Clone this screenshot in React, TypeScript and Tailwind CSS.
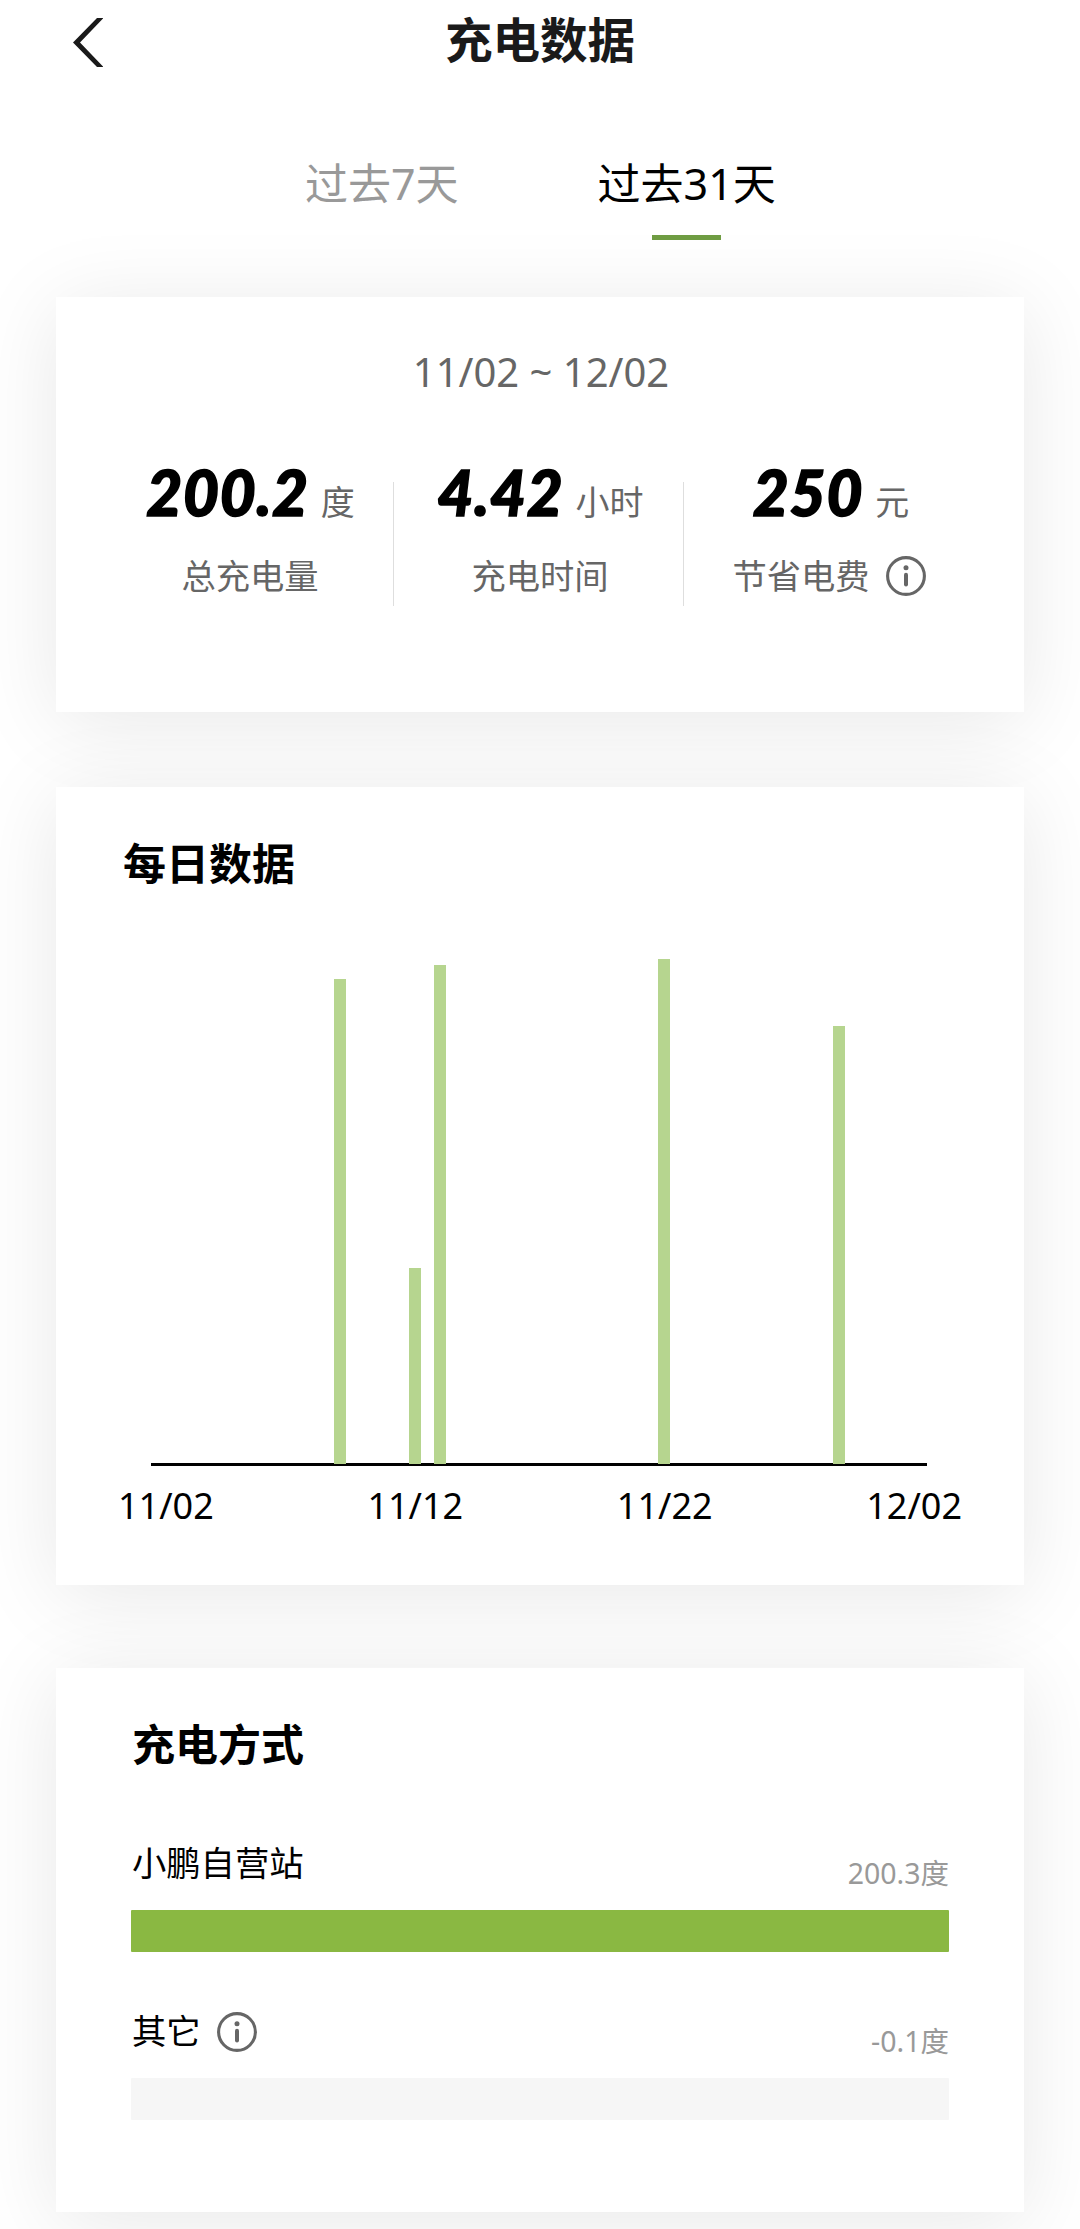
import type { ReactNode } from "react";

const SANS = "font-['Noto_Sans','Noto_Sans_CJK_SC',sans-serif]";

const DAYS = 31;
const dailyBars: Record<number, number> = { 7: 485, 10: 196, 11: 499, 20: 505, 27: 438 };
const axisLabels = ["11/02", "11/12", "11/22", "12/02"];

function BackIcon() {
  return (
    <svg viewBox="0 0 30 49" className="h-[49px] w-[30px] fill-[#1a1a1a]">
      <path d="M0 24.5 24 0h6.5L7 24.5 30.5 49H24z" />
    </svg>
  );
}

function InfoIcon() {
  return (
    <svg viewBox="0 0 40 40" className="size-10 shrink-0" fill="none" stroke="#666">
      <circle cx="20" cy="20" r="18.4" strokeWidth="3.1" />
      <path d="M20 18.8v9.6" strokeWidth="4" strokeLinecap="round" />
      <circle cx="20" cy="11.8" r="2.5" fill="#666" stroke="none" />
    </svg>
  );
}

function Card({ className, children }: { className: string; children: ReactNode }) {
  return (
    <section className={`mx-14 bg-white shadow-[0_10px_80px_rgba(0,0,0,0.095)] ${className}`}>
      {children}
    </section>
  );
}

function Stat({ value, unit, label, info, last }: { value: string; unit: string; label: string; info?: boolean; last?: boolean }) {
  return (
    <div className={`flex h-[124px] w-[290px] flex-col items-center ${last ? "" : "border-r border-[#dedede]"}`}>
      <div className="-mt-[26px] flex h-[72px] items-baseline gap-3 pl-1 leading-[72px]">
        <span className="font-['Lato',sans-serif] text-[62px] font-black italic tracking-[0.8px] text-black [-webkit-text-stroke:1.6px_black]">
          {value}
        </span>
        <span className="-translate-y-px text-[34px] text-[#666]">{unit}</span>
      </div>
      <div className={`mt-7 flex h-10 items-center gap-4 ${last ? "" : "pl-[3px]"}`}>
        <span className="text-[34.3px] leading-10 text-[#666]">{label}</span>
        {info && <InfoIcon />}
      </div>
    </div>
  );
}

function Method({ name, amount, percent, info }: { name: string; amount: string; percent: number; info?: boolean }) {
  return (
    <div className="mb-[60px] flex h-[108px] flex-col justify-between">
      <div className="flex items-start justify-between">
        <div className="flex h-10 items-center gap-4 pl-px">
          <span className="-mt-[3px] text-[34.3px] leading-10 text-black">{name}</span>
          {info && <InfoIcon />}
        </div>
        <span className="mt-[9px] text-[28.5px] leading-10 text-[#999]">{amount}</span>
      </div>
      <div className="h-[42px] overflow-hidden rounded-[1px] bg-[#f6f6f6]">
        <div className="h-full bg-[#8ab842]" style={{ width: `${percent}%` }} />
      </div>
    </div>
  );
}

export default function App() {
  return (
    <main className={`h-[2229px] w-[1080px] overflow-hidden bg-white ${SANS}`}>
      <header className="grid h-[141px] grid-cols-[1fr_auto_1fr] items-start px-[73px]">
        <button className="mt-[18px] justify-self-start" aria-label="返回">
          <BackIcon />
        </button>
        <h1 className="mt-2 text-[47.5px] font-bold leading-[64px] text-[#1a1a1a]">充电数据</h1>
      </header>

      <nav className="flex h-[156px] gap-[139px] pl-[305px] pt-[13px] text-[43px] leading-[60px]">
        <button className="h-[60px] text-[#999]">过去7天</button>
        <button className="flex h-[86px] flex-col items-center justify-between text-black">
          <span>过去31天</span>
          <span className="h-[5px] w-[69px] bg-[#6f9c42]" />
        </button>
      </nav>

      <Card className="h-[415px] px-12 pt-[47px]">
        <p className="pl-[2px] text-center text-[40px] leading-[56px] text-[#666]">11/02 ~ 12/02</p>
        <div className="mt-[82px] flex">
          <Stat value="200.2" unit="度" label="总充电量" />
          <Stat value="4.42" unit="小时" label="充电时间" />
          <Stat value="250" unit="元" label="节省电费" info last />
        </div>
      </Card>

      <Card className="mt-[75px] h-[798px] pt-[47px]">
        <h2 className="pl-[67px] text-[43px] font-bold leading-[60px] text-black">每日数据</h2>
        <div className="ml-[95px] mt-[59px] h-[513px] w-[776px] border-b-[3px] border-black">
          <div className="ml-0.5 flex h-[511px] w-[773px] items-end">
            {Array.from({ length: DAYS }, (_, day) => (
              <div key={day} className="flex flex-1 justify-center">
                {dailyBars[day] && <div className="w-3 bg-[#b6d58f]" style={{ height: dailyBars[day] }} />}
              </div>
            ))}
          </div>
        </div>
        <div className="ml-[62px] mt-[15px] flex w-[844px] justify-between text-[36px] leading-[50px] text-black">
          {axisLabels.map((label) => (
            <span key={label}>{label}</span>
          ))}
        </div>
      </Card>

      <Card className="mt-[83px] h-[544px] px-[75px] pt-[47px]">
        <h2 className="mb-[69px] pl-px text-[43px] font-bold leading-[60px] text-black">充电方式</h2>
        <Method name="小鹏自营站" amount="200.3度" percent={100} />
        <Method name="其它" amount="-0.1度" percent={0} info />
      </Card>
    </main>
  );
}
